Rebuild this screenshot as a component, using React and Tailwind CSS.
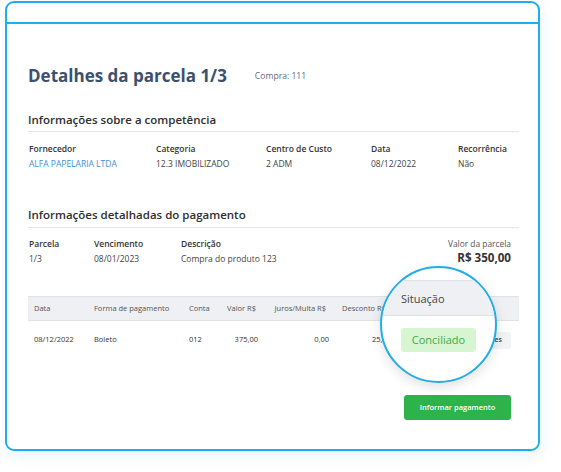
import React from 'react';

const font = { fontFamily: '"Open Sans", Lato, sans-serif' };

const competencia = [
  { label: 'Fornecedor', value: 'ALFA PAPELARIA LTDA', w: 'w-[127px]', link: true },
  { label: 'Categoria', value: '12.3 IMOBILIZADO', w: 'w-[110px]' },
  { label: 'Centro de Custo', value: '2 ADM', w: 'w-[105px]' },
  { label: 'Data', value: '08/12/2022', w: 'w-[87px]' },
  { label: 'Recorrência', value: 'Não', w: 'w-[60px]' },
];

export default function App() {
  return (
    <div className="relative w-[561px] h-[472px] bg-white pt-px pl-[5px] text-[#333]" style={font}>
      <div className="w-[535px] h-[450px] rounded-[9px] border-2 border-[#1eaee8] shadow-[2px_5px_14px_rgba(30,150,220,0.10)] bg-white">
        {/* barra superior */}
        <div className="h-[21px] border-b-2 border-[#1eaee8]" />

        <div className="pl-[21px] pr-[19px]">
          {/* Título */}
          <div className="mt-[40px] flex items-center h-[24px]">
            <h1 className="text-[17px] leading-[24px] font-bold text-[#3b5170]">Detalhes da parcela 1/3</h1>
            <span className="ml-[28px] text-[8.6px] text-[#5a6b80]">Compra: 111</span>
          </div>

          {/* Competência */}
          <h2 className="mt-[24px] pb-[3px] text-[11.5px] leading-[16px] font-semibold text-[#2f2f2f] border-b border-[#e4e6ea]">
            Informações sobre a competência
          </h2>
          <div className="mt-[11px] flex pl-px">
            {competencia.map(c => (
              <div key={c.label} className={c.w}>
                <div className="text-[8.5px] leading-[12px] font-semibold text-[#333]">{c.label}</div>
                <div className={`mt-[3px] text-[8.5px] leading-[12px] ${c.link ? 'text-[#3f8fd8]' : 'text-[#444]'}`}>{c.value}</div>
              </div>
            ))}
          </div>

          {/* Pagamento */}
          <h2 className="mt-[37px] pb-[4px] text-[11.5px] leading-[16px] font-semibold text-[#2f2f2f] border-b border-[#e4e6ea]">
            Informações detalhadas do pagamento
          </h2>
          <div className="mt-[10px] flex h-[27px] pl-px pr-[8px]">
            <div className="w-[65px]">
              <div className="text-[8.5px] leading-[12px] font-semibold">Parcela</div>
              <div className="mt-[3px] text-[8.5px] leading-[12px] text-[#444]">1/3</div>
            </div>
            <div className="w-[87px]">
              <div className="text-[8.5px] leading-[12px] font-semibold">Vencimento</div>
              <div className="mt-[3px] text-[8.5px] leading-[12px] text-[#444]">08/01/2023</div>
            </div>
            <div className="flex-1">
              <div className="text-[8.5px] leading-[12px] font-semibold">Descrição</div>
              <div className="mt-[3px] text-[8.5px] leading-[12px] text-[#444]">Compra do produto 123</div>
            </div>
            <div className="text-right">
              <div className="text-[8.4px] leading-[12px] text-[#555]">Valor da parcela</div>
              <div className="mt-[1px] text-[11.6px] leading-[14px] font-bold text-[#333]">R$ 350,00</div>
            </div>
          </div>

          {/* Tabela */}
          <div className="mt-[31px]">
            <div className="flex items-center h-[25px] bg-[#eef0f4] border-y border-[#dfe2e8] text-[7.5px] text-[#555]">
              <div className="w-[66px] pl-[6px]">Data</div>
              <div className="w-[95px]">Forma de pagamento</div>
              <div className="w-[37px]">Conta</div>
              <div className="w-[30px] text-right">Valor R$</div>
              <div className="w-[70px] text-right">Juros/Multa R$</div>
              <div className="w-[16px]" />
              <div className="w-[60px]">Desconto R$</div>
            </div>
            <div className="flex items-center h-[38px] text-[7.5px] text-[#333]">
              <div className="w-[66px] pl-[6px]">08/12/2022</div>
              <div className="w-[95px]">Boleto</div>
              <div className="w-[37px]">012</div>
              <div className="w-[32px] text-right">375,00</div>
              <div className="w-[71px] text-right">0,00</div>
              <div className="w-[62px] text-right">25,00</div>
              <div className="flex-1" />
              <div className="h-[17px] px-[9px] flex items-center rounded-[3px] bg-[#f1f3f6] text-[7px] font-semibold text-[#444] mr-[8px]">Detalhes</div>
            </div>
          </div>

          {/* Botão */}
          <div className="mt-[36px] flex justify-end pr-[8px]">
            <button className="w-[107px] h-[25px] rounded-[3px] bg-[#2db34a] text-white text-[7.5px] font-semibold">
              Informar pagamento
            </button>
          </div>
        </div>
      </div>

      {/* Lupa sobre a coluna Situação */}
      <div className="absolute left-[380px] top-[266px] w-[117px] h-[117px] rounded-full border-2 border-[#1eaee8] bg-white overflow-hidden shadow-[0_4px_12px_rgba(0,0,0,0.12)]">
        <div className="absolute left-0 right-0 top-[12px] h-[36px] bg-[#eef0f4] border-y border-[#dfe2e8]" />
        <div className="absolute left-[19px] top-[23px] text-[11px] leading-[16px] text-[#444]">Situação</div>
        <div className="absolute left-[19px] top-[60px] w-[75px] h-[24px] rounded-[3px] bg-[#d6f5d0] flex items-center justify-center text-[11px] text-[#3dab49]">
          Conciliado
        </div>
      </div>
    </div>
  );
}
